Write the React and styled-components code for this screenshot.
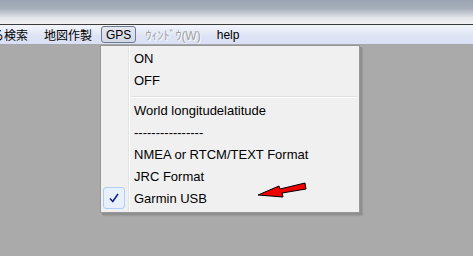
import React from 'react';
import styled, { createGlobalStyle } from 'styled-components';

const Global = createGlobalStyle`
  html, body { margin: 0; padding: 0; }
  body {
    width: 473px;
    height: 256px;
    overflow: hidden;
    background: #aaaaaa;
    font-family: "Liberation Sans", "Noto Sans CJK JP", sans-serif;
  }
`;

const Screen = styled.div`
  display: flex;
  flex-direction: column;
  width: 473px;
  height: 256px;
`;

const TitleStrip = styled.div`
  height: 24px;
  flex: none;
  background: linear-gradient(
    180deg,
    #9aa3b1 0%,
    #a6aebb 35%,
    #c4c9d1 55%,
    #e4e7eb 75%,
    #f1f2f4 100%
  );
  border-bottom: 1px solid #3c3c3c;
`;

const MenuBar = styled.div`
  height: 19px;
  flex: none;
  display: flex;
  align-items: center;
  background: linear-gradient(180deg, #f3f5fb 0%, #e9edf8 30%, #dde3f4 60%, #dbe1f3 100%);
  border-bottom: 1px solid #a3a6ad;
  font-size: 12px;
  color: #000;
  overflow: hidden;
`;

const BarItem = styled.div`
  flex: none;
  height: 17px;
  display: flex;
  align-items: center;
  padding: 0 ${p => p.$pad ?? 6}px;
  box-sizing: border-box;
  margin-right: ${p => p.$gap ?? 2}px;
  margin-left: ${p => p.$shift || 0}px;
  color: ${p => (p.$disabled ? '#a2a2a2' : '#000')};
  text-shadow: ${p => (p.$disabled ? '1px 1px 0 #fafbfe' : 'none')};
  border: 1px solid ${p => (p.$open ? '#6f7a8c' : 'transparent')};
  border-radius: 3px;
  background: ${p => (p.$open ? 'linear-gradient(180deg, #e4e8f1, #d2d8e6)' : 'transparent')};
`;

const Workspace = styled.div`
  position: relative;
  flex: 1;
  background: #aaaaaa;
`;

const Dropdown = styled.div`
  position: absolute;
  left: 100px;
  top: 0;
  width: 257px;
  padding: 1px 0 3px 1px;
  background: #f0f0f0;
  border: 1px solid #979797;
  box-shadow: 2px 2px 0 #8f8f8f, 3px 3px 1px #9b9b9b;
  &::before {
    content: '';
    position: absolute;
    left: 27px;
    top: 0;
    bottom: 0;
    width: 2px;
    background: linear-gradient(90deg, #e2e3e3 50%, #ffffff 50%);
  }
`;

const Item = styled.div`
  position: relative;
  height: 22px;
  display: flex;
  align-items: center;
  font-size: 13px;
  color: #000;
`;

const Gutter = styled.div`
  width: 32px;
  flex: none;
  display: flex;
  align-items: center;
  justify-content: flex-start;
`;

const CheckBox = styled.div`
  width: 20px;
  height: 20px;
  margin-left: 1px;
  border: 1px solid #aecff7;
  border-radius: 3px;
  background: #e8f0fb;
  display: flex;
  align-items: center;
  justify-content: center;
`;

const Separator = styled.div`
  height: 8px;
  margin-left: 29px;
  margin-right: 2px;
  display: flex;
  align-items: flex-start;
  &::after {
    content: '';
    display: block;
    width: 100%;
    margin-top: 5px;
    height: 1px;
    background: #e0e0e0;
    border-bottom: 1px solid #ffffff;
  }
`;

const Pointer = styled.svg`
  position: absolute;
  left: 256px;
  top: 137px;
  width: 54px;
  height: 18px;
`;

const items = [
  { label: 'ON' },
  { label: 'OFF' },
  { sep: true },
  { label: 'World longitudelatitude' },
  { label: '----------------' },
  { label: 'NMEA or RTCM/TEXT Format' },
  { label: 'JRC Format' },
  { label: 'Garmin USB', checked: true },
];

const Check = () => (
  <svg width="12" height="12" viewBox="0 0 12 12">
    <path d="M2 6.5 L4.8 9.5 L10 2" fill="none" stroke="#16258c" strokeWidth="1.6" />
  </svg>
);

export default function App() {
  return (
    <Screen>
      <Global />
      <TitleStrip />
      <MenuBar>
        <BarItem $shift={-15}>る検索</BarItem>
        <BarItem>地図作製</BarItem>
        <BarItem $open $pad={4}>GPS</BarItem>
        <BarItem $disabled>ｳｨﾝﾄﾞｳ(W)</BarItem>
        <BarItem>help</BarItem>
      </MenuBar>
      <Workspace>
        <Dropdown>
          {items.map((it, i) =>
            it.sep ? (
              <Separator key={i} />
            ) : (
              <Item key={i}>
                <Gutter>{it.checked && <CheckBox><Check /></CheckBox>}</Gutter>
                {it.label}
              </Item>
            )
          )}
        </Dropdown>
        <Pointer viewBox="0 0 54 18">
          <polygon
            points="2,13 23,4 24,7 49,1 50,7 26,11 27,15"
            fill="#f00000"
            stroke="#000"
            strokeWidth="1"
          />
        </Pointer>
      </Workspace>
    </Screen>
  );
}
